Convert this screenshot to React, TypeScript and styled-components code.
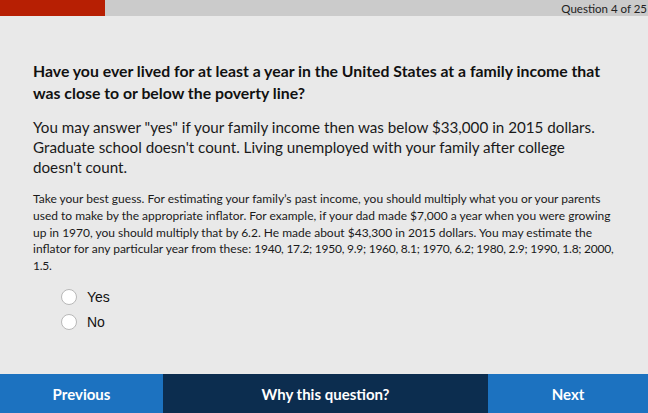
import React from "react";
import styled, { createGlobalStyle } from "styled-components";

const Global = createGlobalStyle`
  html, body { margin: 0; padding: 0; background: #e9e9e9; }
  body { font-family: "Lato", "Open Sans", sans-serif; }
`;

const Page = styled.div`
  width: 648px;
  height: 413px;
  display: flex;
  flex-direction: column;
  background: #e9e9e9;
  overflow: hidden;
`;

const ProgressBar = styled.div`
  height: 16px;
  background: #cbcbcb;
  display: flex;
  align-items: center;
  justify-content: space-between;
`;

const ProgressFill = styled.div`
  align-self: stretch;
  background: #b71f03;
`;

const ProgressLabel = styled.span`
  font-size: 11.5px;
  color: #222;
  padding-right: 1px;
`;

const Body = styled.main`
  flex: 1;
  padding: 44px 32px 0 33px;
  color: #1a1a1a;
`;

const Question = styled.h1`
  margin: 0;
  font-size: 15.8px;
  font-weight: 700;
  line-height: 22px;
  color: #111;
`;

const Lead = styled.p`
  margin: 13px 0 0;
  font-size: 15.2px;
  line-height: 20px;
`;

const Note = styled.p`
  margin: 14px 0 0;
  font-size: 12px;
  line-height: 16.8px;
`;

const Figures = styled.span`
  letter-spacing: -0.25px;
`;

const Options = styled.div`
  margin: 14px 0 0 28px;
  display: flex;
  flex-direction: column;
  gap: 9px;
`;

const Option = styled.label`
  display: flex;
  align-items: center;
  gap: 10px;
  font-family: "Liberation Sans", Arial, sans-serif;
  font-size: 14px;
  color: #111;
`;

const Radio = styled.span`
  width: 16px;
  height: 16px;
  border-radius: 50%;
  background: #fff;
  border: 1px solid #b8b8b8;
  box-sizing: border-box;
`;

const Footer = styled.nav`
  height: 39px;
  display: grid;
  grid-template-columns: 163px 1fr 160px;
`;

const NavButton = styled.button<{ $dark?: boolean }>`
  border: 0;
  margin: 0;
  padding: 0;
  background: ${(p) => (p.$dark ? "#0c2d4f" : "#1c72c0")};
  color: #fff;
  font-family: "Lato", "Open Sans", sans-serif;
  font-weight: 700;
  font-size: 15px;
  cursor: pointer;
`;

export default function App() {
  const current = 4;
  const total = 25;
  return (
    <>
      <Global />
      <Page>
        <ProgressBar>
          <ProgressFill style={{ width: `${(current / total) * 100 * 1.013}%` }} />
          <ProgressLabel>Question {current} of {total}</ProgressLabel>
        </ProgressBar>
        <Body>
          <Question>
            Have you ever lived for at least a year in the United States at a family income that was
            close to or below the poverty line?
          </Question>
          <Lead>
            You may answer "yes" if your family income then was below $33,000 in 2015 dollars.
            Graduate school doesn't count. Living unemployed with your family after college doesn't
            count.
          </Lead>
          <Note>
            Take your best guess. For estimating your family’s past income, you should multiply what
            you or your parents used to make by the appropriate inflator. For example, if your dad made
            $7,000 a year when you were growing up in 1970, you should multiply that by 6.2. He made
            about $43,300 in 2015 dollars. You may estimate the inflator for any particular year from
            these:{" "}
            <Figures>1940, 17.2; 1950, 9.9; 1960, 8.1; 1970, 6.2; 1980, 2.9; 1990, 1.8; 2000, 1.5.</Figures>
          </Note>
          <Options>
            <Option>
              <Radio />
              Yes
            </Option>
            <Option>
              <Radio />
              No
            </Option>
          </Options>
        </Body>
        <Footer>
          <NavButton>Previous</NavButton>
          <NavButton $dark>Why this question?</NavButton>
          <NavButton>Next</NavButton>
        </Footer>
      </Page>
    </>
  );
}
